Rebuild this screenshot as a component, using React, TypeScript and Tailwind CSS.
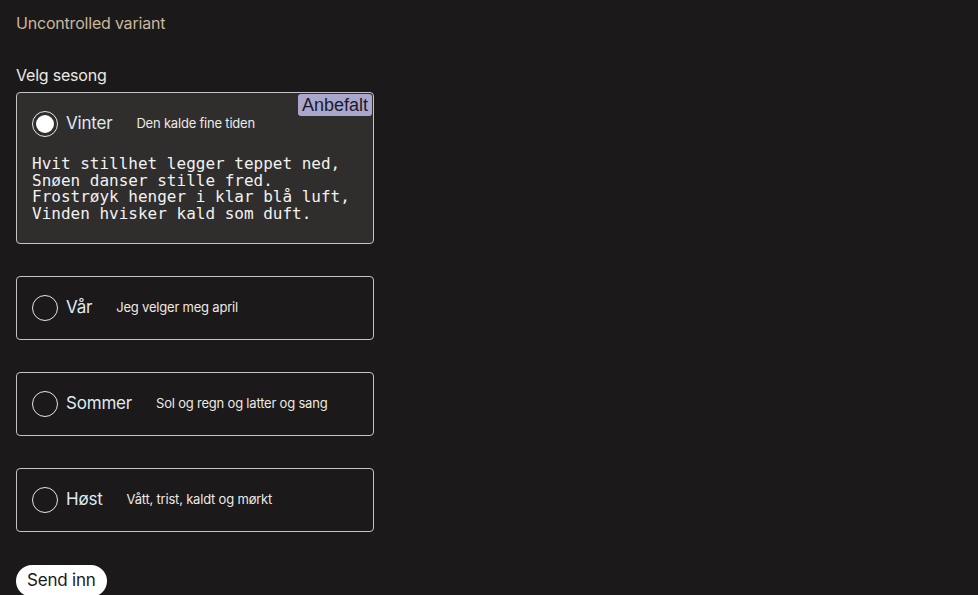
import React from 'react'

interface SeasonOption {
  value: string
  label: string
  description: string
}

const seasons: SeasonOption[] = [
  { value: 'vinter', label: 'Vinter', description: 'Den kalde fine tiden' },
  { value: 'var', label: 'Vår', description: 'Jeg velger meg april' },
  { value: 'sommer', label: 'Sommer', description: 'Sol og regn og latter og sang' },
  { value: 'host', label: 'Høst', description: 'Vått, trist, kaldt og mørkt' }
]

const poem = `Hvit stillhet legger teppet ned,
Snøen danser stille fred.
Frostrøyk henger i klar blå luft,
Vinden hvisker kald som duft.`

function Radio({ checked }: { checked: boolean }) {
  return (
    <span className="flex h-[26px] w-[26px] shrink-0 items-center justify-center rounded-full border-[1.5px] border-[#e6e6e6]">
      {checked && <span className="h-[18px] w-[18px] rounded-full bg-white" />}
    </span>
  )
}

function SeasonCard({ option, checked }: { option: SeasonOption; checked: boolean }) {
  return (
    <label
      className={`relative block rounded-[4px] border border-[#c4c4c4] px-[15px] ${
        checked ? 'bg-[#2f2e2d] pt-[17px] pb-[21px]' : 'bg-[#1b1919] py-[17px]'
      }`}
    >
      {checked && (
        <span className="absolute right-[1px] top-[1px] rounded-[3px] bg-[#aaa7cd] px-[4px] text-[18px] leading-[22px] text-[#1a1a2a] font-['Liberation_Sans',sans-serif] tracking-normal">
          Anbefalt
        </span>
      )}
      <div className="flex items-center h-[28px]">
        <Radio checked={checked} />
        <span className="ml-[8px] text-[17px] text-[#dfe9f3]">{option.label}</span>
        <span className="ml-[24px] text-[13px] text-[#ece9e4] tracking-[-0.2px]">{option.description}</span>
      </div>
      {checked && (
        <pre className="mt-[18px] text-[16px] leading-[16.5px] text-[#f2f2f2] font-['DejaVu_Sans_Mono',monospace] tracking-normal">
          {poem}
        </pre>
      )}
    </label>
  )
}

export default function App() {
  return (
    <div className="min-h-screen bg-[#1b1919] px-4 pt-[12px] font-['Inter',sans-serif] tracking-[-0.2px]">
      <div className="text-[16px] leading-[22px] text-[#c9b79f]">Uncontrolled variant</div>
      <div className="mt-[30px] text-[16px] leading-[22px] text-[#ece9e4]">Velg sesong</div>
      <div className="mt-[6px] flex w-[358px] flex-col gap-[32px]">
        {seasons.map(s => (
          <SeasonCard key={s.value} option={s} checked={s.value === 'vinter'} />
        ))}
      </div>
      <button className="mt-[33px] rounded-full bg-white px-[11px] h-[32px] text-[17px] text-[#1b1919]">
        Send inn
      </button>
    </div>
  )
}
